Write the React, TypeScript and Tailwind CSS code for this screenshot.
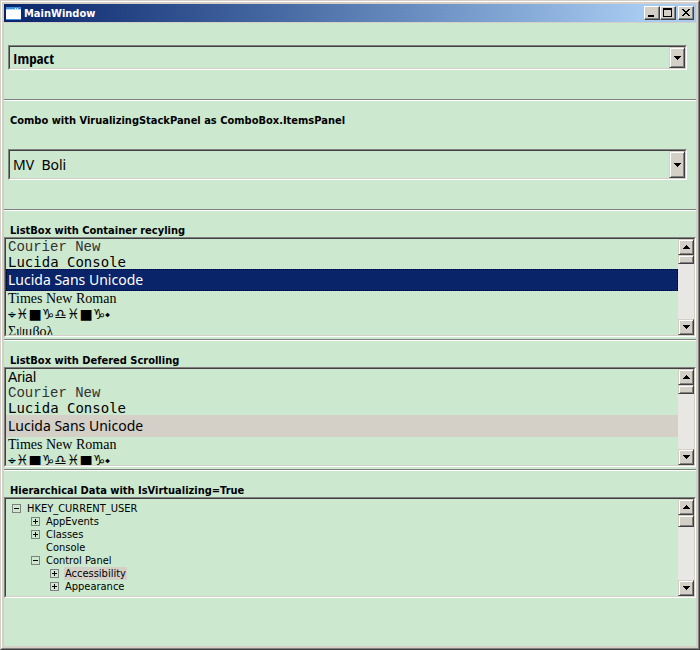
import React, { useState } from "react";
import clsx from "clsx";

interface FontItem {
  name: string;
  className: string;
}

interface TreeNode {
  name: string;
  level: number;
  state: "open" | "closed" | "leaf";
}

const ARIAL: FontItem = {
  name: "Arial",
  className: "h-4 leading-4 font-['Liberation_Sans',sans-serif]",
};

const FONTS: FontItem[] = [
  {
    name: "Courier New",
    className:
      "h-4 leading-[17px] text-[#333333] font-['Liberation_Mono',monospace]",
  },
  {
    name: "Lucida Console",
    className: "h-[14px] leading-[14px] font-['DejaVu_Sans_Mono',monospace]",
  },
  {
    name: "Lucida Sans Unicode",
    className: "h-[22px] leading-[21px] font-['Noto_Sans',sans-serif]",
  },
  {
    name: "Times New Roman",
    className: "h-4 leading-4 font-['Liberation_Serif',serif]",
  },
  {
    // Wingdings
    name: "⌖♓\ufe0e■♑\ufe0e♎\ufe0e♓\ufe0e■♑\ufe0e⬩",
    className: "h-4 leading-[14px] font-['DejaVu_Sans',sans-serif]",
  },
];

const SYMBOL: FontItem = {
  name: "Σψμβολ",
  className: "h-4 leading-[18px] font-['Liberation_Serif',serif]",
};

const NODES: TreeNode[] = [
  { name: "HKEY_CURRENT_USER", level: 0, state: "open" },
  { name: "AppEvents", level: 1, state: "closed" },
  { name: "Classes", level: 1, state: "closed" },
  { name: "Console", level: 1, state: "leaf" },
  { name: "Control Panel", level: 1, state: "open" },
  { name: "Accessibility", level: 2, state: "closed" },
  { name: "Appearance", level: 2, state: "closed" },
];

const INDENT = ["pl-[6px]", "pl-[25px]", "pl-[44px]"];

const RAISED =
  "bg-[#d4d0c8] border border-t-[#d4d0c8] border-l-[#d4d0c8] border-r-[#404040] border-b-[#404040] shadow-[inset_1px_1px_#ffffff,inset_-1px_-1px_#808080]";

const CAPTION =
  "bg-[#d4d0c8] border border-t-white border-l-white border-r-[#404040] border-b-[#404040] shadow-[inset_-1px_-1px_#808080]";

const Sunken: React.FC<{ className?: string; children: React.ReactNode }> = ({
  className,
  children,
}) => (
  <div
    className={clsx(
      "border border-t-[#808080] border-l-[#808080] border-r-white border-b-white",
      className
    )}
  >
    <div className="flex h-full border border-t-[#404040] border-l-[#404040] border-r-[#d4d0c8] border-b-[#d4d0c8]">
      {children}
    </div>
  </div>
);

const Arrow: React.FC<{ up?: boolean }> = ({ up }) => (
  <svg
    viewBox="0 0 7 4"
    className={clsx("w-[7px] h-1", up && "rotate-180")}
    shapeRendering="crispEdges"
  >
    <path d="M0 0h7v1H6v1H5v1H4v1H3V3H2V2H1V1H0z" />
  </svg>
);

const Combo: React.FC<{
  label: string;
  options: string[];
  className: string;
  fontClass: string;
}> = ({ label, options, className, fontClass }) => (
  <Sunken className={clsx("ml-1 mr-[9px]", className)}>
    <div className="relative flex grow">
      <select
        aria-label={label}
        className={clsx(
          "grow appearance-none bg-transparent pl-[3px] text-black outline-none",
          fontClass
        )}
      >
        {options.map((option) => (
          <option key={option}>{option}</option>
        ))}
      </select>
      <span
        className={clsx(
          "pointer-events-none absolute inset-y-0 right-0 flex w-4 items-center justify-center",
          RAISED
        )}
      >
        <Arrow />
      </span>
    </div>
  </Sunken>
);

const ScrollBar: React.FC<{ thumb: string }> = ({ thumb }) => (
  <div className="flex w-4 shrink-0 flex-col bg-[#e9e7e3]">
    <button
      aria-label="Up"
      className={clsx("flex h-4 items-center justify-center", RAISED)}
    >
      <Arrow up />
    </button>
    <div className={clsx(thumb, RAISED)} />
    <button
      aria-label="Down"
      className={clsx("mt-auto flex h-4 items-center justify-center", RAISED)}
    >
      <Arrow />
    </button>
  </div>
);

const Title: React.FC<{ children: React.ReactNode }> = ({ children }) => (
  <h2 className="pt-[14px] pl-[6px] text-[11px] leading-[12px] font-bold">
    {children}
  </h2>
);

const Separator = () => (
  <hr className="border-t border-b border-t-[#808080] border-b-white" />
);

const FontList: React.FC<{
  label: string;
  fonts: FontItem[];
  focused?: boolean;
}> = ({ label, fonts, focused }) => {
  const [selected, setSelected] = useState("Lucida Sans Unicode");

  return (
    <Sunken className="mb-0.5 h-[100px]">
      <ul
        role="listbox"
        aria-label={label}
        className="grow overflow-hidden text-[14px]"
      >
        {fonts.map((font) => (
          <li
            key={font.name}
            role="option"
            aria-selected={font.name === selected}
            onClick={() => setSelected(font.name)}
            className={clsx(
              "pl-0.5 whitespace-nowrap",
              font.className,
              font.name === selected &&
                (focused
                  ? "bg-[#0a246a] text-white outline-1 -outline-offset-1 outline-dotted outline-black"
                  : "bg-[#d4d0c8]")
            )}
          >
            {font.name}
          </li>
        ))}
      </ul>
      <ScrollBar thumb="h-[9px]" />
    </Sunken>
  );
};

const Expander: React.FC<{ open: boolean; name: string }> = ({
  open,
  name,
}) => (
  <button aria-label={name} className="size-[9px]">
    <svg
      viewBox="0 0 9 9"
      className="size-[9px]"
      shapeRendering="crispEdges"
    >
      <path d="M0 0h9v9H0zM1 1v7h7V1z" fill="#808080" fillRule="evenodd" />
      <path d="M2 4h5v1H2z" />
      {!open && <path d="M4 2h1v5H4z" />}
    </svg>
  </button>
);

const RegistryTree = () => {
  const [selected, setSelected] = useState("Accessibility");

  return (
    <Sunken className="h-[101px]">
      <ul
        role="tree"
        aria-label="Registry"
        className="grow overflow-hidden pt-[3px] text-[11px] leading-[13px]"
      >
        {NODES.map((node) => (
          <li
            key={node.name}
            role="treeitem"
            aria-level={node.level + 1}
            aria-selected={node.name === selected}
            className={clsx(
              "flex h-[13px] items-center gap-[5px]",
              INDENT[node.level]
            )}
          >
            {node.state === "leaf" ? (
              <span className="size-[9px]" />
            ) : (
              <Expander open={node.state === "open"} name={node.name} />
            )}
            <span
              onClick={() => setSelected(node.name)}
              className={clsx(
                "px-px whitespace-nowrap",
                node.name === selected && "bg-[#d4d0c8]"
              )}
            >
              {node.name}
            </span>
          </li>
        ))}
      </ul>
      <ScrollBar thumb="h-3" />
    </Sunken>
  );
};

const TitleBar = () => (
  <header className="flex h-[19px] items-center border-b border-[#d4d0c8] bg-linear-to-r from-[#0a246a] to-[#a6caf0] to-92% px-0.5">
    <svg
      viewBox="0 0 15 13"
      className="h-[13px] w-[15px]"
      shapeRendering="crispEdges"
    >
      <path d="M0 0h15v13H0z" fill="#3f8fdc" />
      <path d="M0 2h15v10H0z" fill="#ffffff" />
      <path d="M0 2h15v1H0z" fill="#b9dcf8" />
      <path d="M9 1h1v1H9zM11 1h1v1h-1z" fill="#ffffff" />
      <path d="M13 1h1v1h-1z" fill="#c0392b" />
    </svg>
    <h1 className="grow pt-0.5 pl-[3px] text-[11px] font-bold text-white">
      MainWindow
    </h1>
    <div className="flex">
      <button aria-label="Minimize" className={clsx("h-[14px] w-4", CAPTION)}>
        <svg viewBox="0 0 14 12" shapeRendering="crispEdges">
          <path d="M3 8h6v2H3z" />
        </svg>
      </button>
      <button aria-label="Maximize" className={clsx("h-[14px] w-4", CAPTION)}>
        <svg viewBox="0 0 14 12" shapeRendering="crispEdges">
          <path d="M2 1h9v9H2zM3 3v6h7V3z" fillRule="evenodd" />
        </svg>
      </button>
      <button
        aria-label="Close"
        className={clsx("ml-0.5 h-[14px] w-4", CAPTION)}
      >
        <svg viewBox="0 0 14 12" shapeRendering="crispEdges">
          <path d="M3 2h2v1h1v1h2V3h1V2h2v1h-1v1H9v1H8v1h1v1h1v1h1v1H9V8H8V7H6v1H5v1H3V8h1V7h1V6h1V5H5V4H4V3H3z" />
        </svg>
      </button>
    </div>
  </header>
);

const App: React.FC = () => {
  return (
    <div className="flex min-h-screen flex-col border border-t-[#d4d0c8] border-l-[#d4d0c8] border-r-[#404040] border-b-[#404040] font-['DejaVu_Sans_Condensed','DejaVu_Sans',sans-serif] text-black">
      <div className="flex grow flex-col border border-t-white border-l-white border-r-[#808080] border-b-[#808080]">
        <div className="grow border-2 border-[#d4d0c8] bg-[#cce8cf]">
          <TitleBar />
          <main>
            <section className="pt-[22px] pb-[29px]">
              <Combo
                label="Font"
                options={["Impact", "Arial", "Courier New"]}
                className="h-[25px]"
                fontClass="text-[15px] font-black font-['Impact','Liberation_Sans_Narrow','Open_Sans_Condensed','DejaVu_Sans_Condensed',sans-serif]"
              />
            </section>
            <Separator />
            <section className="pb-[29px]">
              <Title>
                Combo with VirualizingStackPanel as ComboBox.ItemsPanel
              </Title>
              <Combo
                label="Virtualized font"
                options={["MV\u00a0 Boli", "Arial", "Courier New"]}
                className="mt-[22px] h-[31px]"
                fontClass="text-[14px] font-['Noto_Sans',sans-serif]"
              />
            </section>
            <Separator />
            <section>
              <Title>ListBox with Container recyling</Title>
              <FontList
                label="Container recyling"
                fonts={[...FONTS, SYMBOL]}
                focused
              />
            </section>
            <Separator />
            <section>
              <Title>ListBox with Defered Scrolling</Title>
              <FontList label="Defered Scrolling" fonts={[ARIAL, ...FONTS]} />
            </section>
            <Separator />
            <section>
              <Title>Hierarchical Data with IsVirtualizing=True</Title>
              <RegistryTree />
            </section>
          </main>
        </div>
      </div>
    </div>
  );
};

export default App;
